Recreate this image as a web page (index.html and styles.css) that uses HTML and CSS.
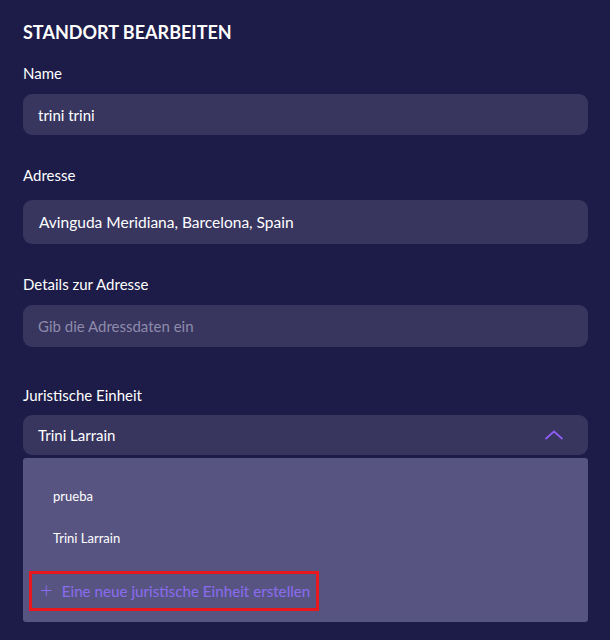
FILE: index.html
```html
<!DOCTYPE html>
<html lang="de">
<head>
<meta charset="utf-8">
<title>Standort bearbeiten</title>
<link rel="stylesheet" href="styles.css">
</head>
<body>
<main class="panel">
  <h1 class="title">STANDORT BEARBEITEN</h1>

  <div class="field field-name">
    <label class="label">Name</label>
    <div class="input input-name">trini trini</div>
  </div>

  <div class="field field-address">
    <label class="label">Adresse</label>
    <div class="input input-address">Avinguda Meridiana, Barcelona, Spain</div>
  </div>

  <div class="field field-details">
    <label class="label">Details zur Adresse</label>
    <div class="input input-details placeholder">Gib die Adressdaten ein</div>
  </div>

  <div class="field field-entity">
    <label class="label">Juristische Einheit</label>
    <div class="input select">
      <span>Trini Larrain</span>
      <svg class="chevron" width="20" height="10" viewBox="0 0 20 10" aria-hidden="true">
        <path d="M1.5 9 L10 1.5 L18.5 9" fill="none" stroke="#8f5cf5" stroke-width="1.8"/>
      </svg>
    </div>
    <div class="dropdown">
      <div class="option">prueba</div>
      <div class="option">Trini Larrain</div>
      <div class="create">
        <span class="plus">+</span>
        <span>Eine neue juristische Einheit erstellen</span>
      </div>
    </div>
  </div>
</main>
</body>
</html>
```
FILE: styles.css
```css
html, body {
  margin: 0;
  padding: 0;
  background: #1d1b48;
}
body {
  font-family: "Lato", "Noto Sans", sans-serif;
  color: #ffffff;
}
.panel {
  width: 565px;
  padding: 20px 0 0 23px;
}
.title {
  margin: 0;
  font-size: 18px;
  font-weight: 700;
  line-height: 24px;
}
.field {
  display: flex;
  flex-direction: column;
}
.label {
  font-size: 15px;
  line-height: 20px;
}
.field-name { margin-top: 19px; }
.field-name .label { margin-bottom: 11px; }
.field-address { margin-top: 30px; }
.field-address .label { margin-bottom: 15px; }
.field-details { margin-top: 30px; }
.field-details .label { margin-bottom: 11px; }
.field-entity { margin-top: 38px; }
.field-entity .label { margin-bottom: 10px; }

.input {
  background: #38355f;
  border-radius: 9px;
  padding: 0 15px;
  display: flex;
  align-items: center;
  font-size: 15px;
}
.input-name { height: 41px; }
.input-address { height: 44px; font-size: 15.5px; padding-left: 16px; }
.input-details { height: 42px; }
.placeholder { color: #8e8bab; }
.select {
  height: 40px;
  justify-content: space-between;
  padding-right: 24px;
}
.chevron { display: block; }

.dropdown {
  margin-top: 3px;
  background: #585482;
  border-radius: 3px;
  height: 164px;
  padding: 0 6px;
  display: flex;
  flex-direction: column;
}
.option {
  font-size: 13px;
  padding-left: 24px;
  line-height: 18px;
}
.option:first-child { margin-top: 29px; }
.option + .option { margin-top: 24px; }
.create {
  box-sizing: border-box;
  margin-top: 24px;
  width: 290px;
  height: 40px;
  border: 3px solid #e8191e;
  display: flex;
  align-items: center;
  color: #8a6cf0;
  font-size: 15.2px;
  padding-left: 8px;
  gap: 9px;
}
.plus {
  font-size: 22px;
  font-weight: 300;
  line-height: 1;
  margin-top: -2px;
}
```
